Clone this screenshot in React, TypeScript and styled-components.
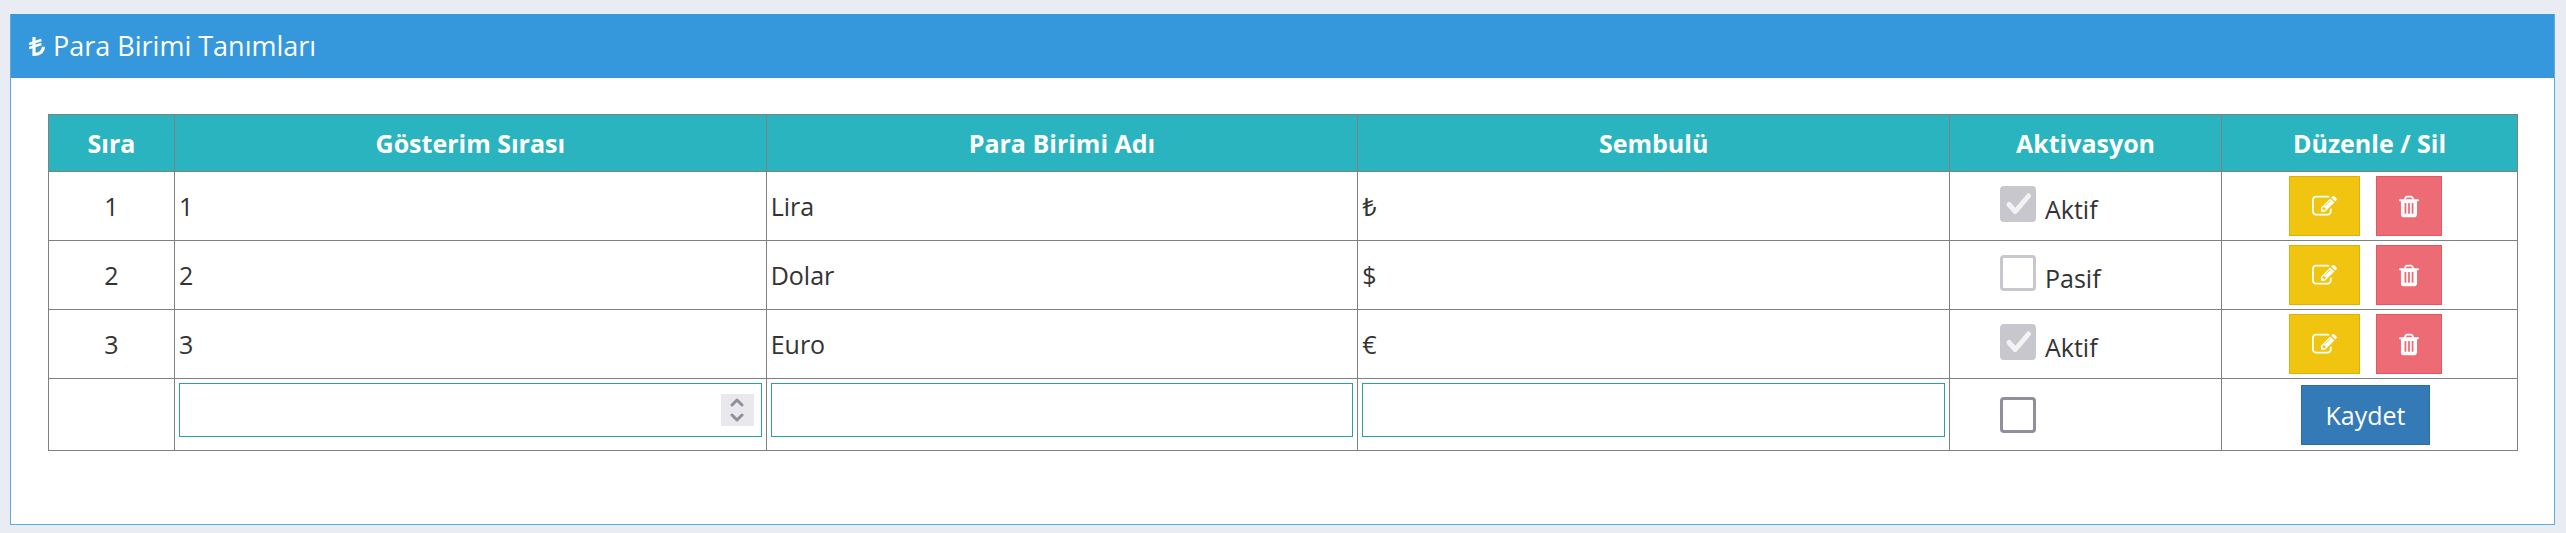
import React, { useState } from "react";
import styled, { createGlobalStyle } from "styled-components";

const GlobalStyle = createGlobalStyle`
  *, *::before, *::after { box-sizing: border-box; }
  body {
    margin: 0;
    padding: 14px 11px 9px 10px;
    background: #e9ecf3;
    color: #333;
    font-family: "Open Sans", "Noto Sans", sans-serif;
    font-size: 25px;
    line-height: 36px;
  }
  input, button { font: inherit; }
`;

const Panel = styled.section`
  background: #fff;
  border: 1px solid #5cace2;
  border-top: 0;
`;

const PanelHeader = styled.header`
  display: flex;
  align-items: center;
  gap: 8px;
  height: 64px;
  padding: 0 18px;
  background: #3598dc;
  color: #fff;
`;

const PanelTitle = styled.h1`
  margin: 0;
  font-size: 27px;
  font-weight: 400;
`;

const PanelBody = styled.div`
  padding: 36px 36px 73px 37px;
`;

const Table = styled.table`
  width: 100%;
  table-layout: fixed;
  border-collapse: collapse;
`;

const Col = styled.col<{ $width?: number }>`
  ${(p) => (p.$width ? `width: ${p.$width}px;` : "")}
`;

const HeadCell = styled.th`
  height: 57px;
  padding: 4px;
  border: 1px solid #808080;
  background: #2ab4c0;
  color: #fff;
  font-weight: 700;
`;

const Cell = styled.td<{ $center?: boolean }>`
  padding: 4px;
  border: 1px solid #808080;
  text-align: ${(p) => (p.$center ? "center" : "left")};
`;

const Actions = styled.div`
  display: flex;
  justify-content: center;
  gap: 16px;
  padding-right: 8px;
`;

const Button = styled.button<{ $tone: "edit" | "remove" | "save" }>`
  display: flex;
  align-items: center;
  height: 60px;
  padding: 0 ${(p) => (p.$tone === "save" ? 24 : 22)}px;
  border: 1px solid;
  color: #fff;
  cursor: pointer;
  ${(p) =>
    ({
      edit: "background: #f1c40f; border-color: #dab10d;",
      remove: "background: #ed6b75; border-color: #ea5460;",
      save: "background: #337ab7; border-color: #2e6da4;",
    })[p.$tone]}
`;

const Activation = styled.label<{ $bare?: boolean }>`
  display: flex;
  align-items: flex-end;
  gap: 9px;
  height: ${(p) => (p.$bare ? 36 : 41)}px;
  padding-left: 46px;
`;

const CheckBox = styled.span`
  display: grid;
  align-self: flex-start;
  > * { grid-area: 1 / 1; }
`;

const CheckInput = styled.input`
  appearance: none;
  width: 36px;
  height: 36px;
  margin: 0;
  border: 3px solid #8f8f9d;
  border-radius: 4px;
  background: #fff;
  &:disabled { border-color: #c7c7cd; }
  &:checked { background: #8f8f9d; }
  &:disabled:checked { background: #c7c7cd; }
  & + svg { visibility: hidden; pointer-events: none; }
  &:checked + svg { visibility: visible; }
`;

const Field = styled.div`
  display: flex;
  align-items: center;
  height: 54px;
  margin-bottom: 9px;
  border: 1px solid #27a0ab;
  background: #fff;
`;

const FieldInput = styled.input`
  flex: 1;
  min-width: 0;
  height: 100%;
  padding: 0 8px;
  border: 0;
  outline: 0;
  background: transparent;
  color: inherit;
  appearance: textfield;
  &::-webkit-inner-spin-button { appearance: none; margin: 0; }
`;

const Spinner = styled.div`
  display: flex;
  flex-direction: column;
  width: 33px;
  height: 32px;
  margin-right: 7px;
  background: #e9e9ed;
`;

const SpinButton = styled.button`
  flex: 1;
  display: flex;
  align-items: center;
  justify-content: center;
  padding: 0;
  border: 0;
  background: transparent;
  color: #8f8f9d;
`;

const LiraIcon = () => (
  <svg width="16" height="19" viewBox="0 0 16 19" fill="none" stroke="currentColor" aria-hidden="true">
    <path d="M5 0V17.4C10.5 17.4 14.2 14.6 14.4 9.8" strokeWidth="3.2" />
    <path d="M0 7.1L12.4 3M0 11.1L12.4 7" strokeWidth="2.4" />
  </svg>
);

const EditIcon = () => (
  <svg width="25" height="25" viewBox="0 0 1792 1792" fill="currentColor" aria-hidden="true">
    <path d="M888 1184l116-116-152-152-116 116v56h96v96h56zm440-720q-16-16-33 1l-350 350q-17 17-1 33t33-1l350-350q17-17 1-33zm80 594v190q0 119-84.5 203.5t-203.5 84.5h-832q-119 0-203.5-84.5t-84.5-203.5v-832q0-119 84.5-203.5t203.5-84.5h832q63 0 117 25 15 7 18 23 3 17-9 29l-49 49q-14 14-32 8-23-6-45-6h-832q-66 0-113 47t-47 113v832q0 66 47 113t113 47h832q66 0 113-47t47-113v-126q0-13 9-22l64-64q15-15 35-7t20 29zm-96-738l288 288-672 672h-288v-288zm444 132l-92 92-288-288 92-92q28-28 68-28t68 28l152 152q28 28 28 68t-28 68z" />
  </svg>
);

const TrashIcon = () => (
  <svg width="20" height="25" viewBox="192 0 1408 1792" fill="currentColor" aria-hidden="true">
    <path d="M704 1376v-704q0-14-9-23t-23-9h-64q-14 0-23 9t-9 23v704q0 14 9 23t23 9h64q14 0 23-9t9-23zm256 0v-704q0-14-9-23t-23-9h-64q-14 0-23 9t-9 23v704q0 14 9 23t23 9h64q14 0 23-9t9-23zm256 0v-704q0-14-9-23t-23-9h-64q-14 0-23 9t-9 23v704q0 14 9 23t23 9h64q14 0 23-9t9-23zm-544-992h448l-48-117q-7-9-17-11h-317q-10 2-17 11zm928 32v64q0 14-9 23t-23 9h-96v948q0 83-47 143.5t-113 60.5h-832q-66 0-113-58.5t-47-141.5v-952h-96q-14 0-23-9t-9-23v-64q0-14 9-23t23-9h309l70-167q15-37 54-63t79-26h320q40 0 79 26t54 63l70 167h309q14 0 23 9t9 23z" />
  </svg>
);

const CheckMark = () => (
  <svg width="36" height="36" viewBox="0 0 36 36" fill="none" stroke="#f3f3f4" strokeWidth="5" strokeLinecap="round" strokeLinejoin="round" aria-hidden="true">
    <path d="M9 18.5L15.3 25.5L28.5 10" />
  </svg>
);

const Chevron = ({ down = false }: { down?: boolean }) => (
  <svg width="14" height="10" viewBox="0 0 14 10" fill="none" stroke="currentColor" strokeWidth="3" strokeLinecap="round" strokeLinejoin="round" aria-hidden="true">
    <path d={down ? "M2 2L7 7L12 2" : "M2 8L7 3L12 8"} />
  </svg>
);

const currencies = [
  { order: 1, name: "Lira", symbol: "₺", active: true },
  { order: 2, name: "Dolar", symbol: "$", active: false },
  { order: 3, name: "Euro", symbol: "€", active: true },
];

export default function App() {
  const [order, setOrder] = useState("");
  const step = (by: number) => setOrder(String(Number(order) + by));

  return (
    <>
      <GlobalStyle />
      <Panel>
        <PanelHeader>
          <LiraIcon />
          <PanelTitle>Para Birimi Tanımları</PanelTitle>
        </PanelHeader>
        <PanelBody>
          <Table>
            <colgroup>
              <Col $width={126} />
              <Col />
              <Col />
              <Col />
              <Col $width={272} />
              <Col $width={296} />
            </colgroup>
            <thead>
              <tr>
                <HeadCell>Sıra</HeadCell>
                <HeadCell>Gösterim Sırası</HeadCell>
                <HeadCell>Para Birimi Adı</HeadCell>
                <HeadCell>Sembulü</HeadCell>
                <HeadCell>Aktivasyon</HeadCell>
                <HeadCell>Düzenle / Sil</HeadCell>
              </tr>
            </thead>
            <tbody>
              {currencies.map((c, i) => (
                <tr key={c.name}>
                  <Cell $center>{i + 1}</Cell>
                  <Cell>{c.order}</Cell>
                  <Cell>{c.name}</Cell>
                  <Cell>{c.symbol}</Cell>
                  <Cell>
                    <Activation>
                      <CheckBox>
                        <CheckInput type="checkbox" checked={c.active} readOnly disabled />
                        <CheckMark />
                      </CheckBox>
                      {c.active ? "Aktif" : "Pasif"}
                    </Activation>
                  </Cell>
                  <Cell>
                    <Actions>
                      <Button type="button" $tone="edit" aria-label="Düzenle"><EditIcon /></Button>
                      <Button type="button" $tone="remove" aria-label="Sil"><TrashIcon /></Button>
                    </Actions>
                  </Cell>
                </tr>
              ))}
              <tr>
                <Cell />
                <Cell>
                  <Field>
                    <FieldInput
                      type="number"
                      aria-label="Gösterim Sırası"
                      value={order}
                      onChange={(e) => setOrder(e.target.value)}
                    />
                    <Spinner>
                      <SpinButton type="button" aria-label="Artır" onClick={() => step(1)}><Chevron /></SpinButton>
                      <SpinButton type="button" aria-label="Azalt" onClick={() => step(-1)}><Chevron down /></SpinButton>
                    </Spinner>
                  </Field>
                </Cell>
                <Cell><Field><FieldInput type="text" aria-label="Para Birimi Adı" /></Field></Cell>
                <Cell><Field><FieldInput type="text" aria-label="Sembulü" /></Field></Cell>
                <Cell>
                  <Activation $bare>
                    <CheckBox>
                      <CheckInput type="checkbox" aria-label="Aktivasyon" />
                      <CheckMark />
                    </CheckBox>
                  </Activation>
                </Cell>
                <Cell>
                  <Actions>
                    <Button type="submit" $tone="save">Kaydet</Button>
                  </Actions>
                </Cell>
              </tr>
            </tbody>
          </Table>
        </PanelBody>
      </Panel>
    </>
  );
}
